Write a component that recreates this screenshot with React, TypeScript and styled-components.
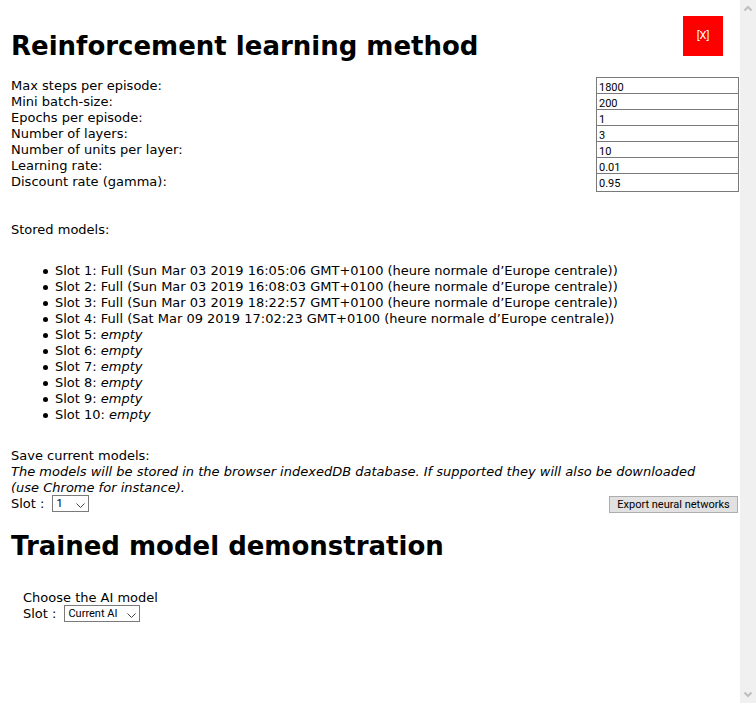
import React, { useState } from 'react';
import styled, { createGlobalStyle } from 'styled-components';

const GlobalStyle = createGlobalStyle`
  *, *::before, *::after { box-sizing: border-box; }
  html, body, #root { height: 100%; }
  body {
    margin: 0;
    background: #fff;
    color: #000;
    font: 13px/16px Verdana, "DejaVu Sans", sans-serif;
  }
`;

const uiFont = 'Tahoma, Roboto, sans-serif';

const Page = styled.div`
  display: flex;
  min-height: 100%;
`;

const Content = styled.main`
  flex: 1;
  min-width: 0;
  position: relative;
  padding: 30px 1px 0 11px;
`;

const CloseButton = styled.button`
  position: absolute;
  top: 16px;
  right: 17px;
  width: 40px;
  height: 40px;
  padding: 0;
  border: 0;
  background: #f00;
  color: #fff;
  font: 11px/16px ${uiFont};
`;

const Title = styled.h1`
  margin: 0;
  font-size: 26px;
  line-height: 32px;
  font-weight: bold;
`;

const Settings = styled.form`
  margin-top: 15px;
`;

const Field = styled.div`
  display: flex;
  justify-content: space-between;
  height: 16px;
  line-height: 18px;
`;

const NumberInput = styled.input`
  width: 143px;
  height: 19px;
  padding: 1px 2px 0;
  border: 1px solid #7a7a7a;
  border-radius: 0;
  background: #fff;
  color: #000;
  font: 11px/16px ${uiFont};
`;

const Stored = styled.section`
  margin-top: 33px;
`;

const SlotList = styled.ul`
  list-style: none;
  margin: 25px 0;
  padding-left: 32px;
`;

const SlotItem = styled.li`
  display: flex;
  align-items: center;

  &::before {
    content: "";
    flex: none;
    width: 5px;
    height: 5px;
    margin-right: 7px;
    border-radius: 50%;
    background: #000;
  }
`;

const Text = styled.p`
  margin: 0;
`;

const Note = styled(Text)`
  padding-right: 20px;
  font-style: italic;
`;

const Row = styled.div`
  display: flex;
  justify-content: space-between;
`;

const SlotLabel = styled.label`
  display: flex;
  align-items: flex-end;
  gap: 8px;
  height: 16px;
`;

const SelectBox = styled.span`
  position: relative;
  display: block;
  height: 17px;
`;

const Select = styled.select<{ $width: number }>`
  appearance: none;
  display: block;
  width: ${p => p.$width}px;
  height: 17px;
  padding: 0 0 0 3px;
  border: 1px solid #7a7a7a;
  border-radius: 0;
  background: #fff;
  color: #000;
  font: 11px/15px ${uiFont};
`;

const Chevron = styled.svg`
  position: absolute;
  right: 4px;
  top: 8px;
  pointer-events: none;
`;

const ExportButton = styled.button`
  width: 129px;
  height: 17px;
  margin-right: 1px;
  padding: 0;
  border: 1px solid #adadad;
  background: #e1e1e1;
  color: #000;
  font: 11px/15px ${uiFont};
  white-space: nowrap;
`;

const Demo = styled.section`
  margin-top: 17px;
`;

const DemoChoice = styled.div`
  margin-top: 28px;
  padding-left: 12px;
`;

const ScrollTrack = styled.aside`
  flex: none;
  display: flex;
  flex-direction: column;
  justify-content: space-between;
  align-items: center;
  width: 16px;
  padding: 5px 0;
  background: #f0f0f0;
`;

const fields = [
  ['Max steps per episode:', '1800'],
  ['Mini batch-size:', '200'],
  ['Epochs per episode:', '1'],
  ['Number of layers:', '3'],
  ['Number of units per layer:', '10'],
  ['Learning rate:', '0.01'],
  ['Discount rate (gamma):', '0.95'],
];

const stored = [
  'Sun Mar 03 2019 16:05:06',
  'Sun Mar 03 2019 16:08:03',
  'Sun Mar 03 2019 18:22:57',
  'Sat Mar 09 2019 17:02:23',
  null, null, null, null, null, null,
];

const slots = stored.map((_, i) => String(i + 1));

function SlotSelect({ id, options, width }: { id: string; options: string[]; width: number }) {
  return (
    <SlotLabel htmlFor={id}>
      Slot :
      <SelectBox>
        <Select id={id} $width={width}>
          {options.map(o => <option key={o}>{o}</option>)}
        </Select>
        <Chevron width="9" height="6" viewBox="0 0 9 6" aria-hidden="true">
          <path d="M.5.5 4.5 4.5 8.5.5" fill="none" stroke="#444" />
        </Chevron>
      </SelectBox>
    </SlotLabel>
  );
}

function Arrow({ down = false }: { down?: boolean }) {
  return (
    <svg width="8" height="7" viewBox="0 0 8 7" aria-hidden="true">
      <path d={down ? 'M.5 1.5 4 5 7.5 1.5' : 'M.5 5.5 4 2 7.5 5.5'} fill="none" stroke="#bfbfbf" strokeWidth="2" />
    </svg>
  );
}

export default function App() {
  const [values, setValues] = useState(fields.map(f => f[1]));
  return (
    <>
      <GlobalStyle />
      <Page>
        <Content>
          <CloseButton type="button" aria-label="Close">[X]</CloseButton>
          <Title>Reinforcement learning method</Title>
          <Settings>
            {fields.map(([label], i) => (
              <Field key={label}>
                <label htmlFor={`field-${i}`}>{label}</label>
                <NumberInput
                  id={`field-${i}`}
                  value={values[i]}
                  onChange={e => setValues(values.map((v, j) => (j === i ? e.target.value : v)))}
                />
              </Field>
            ))}
          </Settings>
          <Stored>
            <Text>Stored models:</Text>
            <SlotList>
              {stored.map((date, i) => (
                <SlotItem key={i}>
                  <span>
                    Slot {i + 1}: {date ? `Full (${date} GMT+0100 (heure normale d’Europe centrale))` : <em>empty</em>}
                  </span>
                </SlotItem>
              ))}
            </SlotList>
            <Text>Save current models:</Text>
            <Note>
              The models will be stored in the browser indexedDB database. If supported they will also be downloaded (use Chrome for instance).
            </Note>
            <Row>
              <SlotSelect id="save-slot" options={slots} width={37} />
              <ExportButton type="button">Export neural networks</ExportButton>
            </Row>
          </Stored>
          <Demo>
            <Title>Trained model demonstration</Title>
            <DemoChoice>
              <Text>Choose the AI model</Text>
              <SlotSelect id="demo-slot" options={['Current AI', ...slots]} width={76} />
            </DemoChoice>
          </Demo>
        </Content>
        <ScrollTrack aria-hidden="true">
          <Arrow />
          <Arrow down />
        </ScrollTrack>
      </Page>
    </>
  );
}
